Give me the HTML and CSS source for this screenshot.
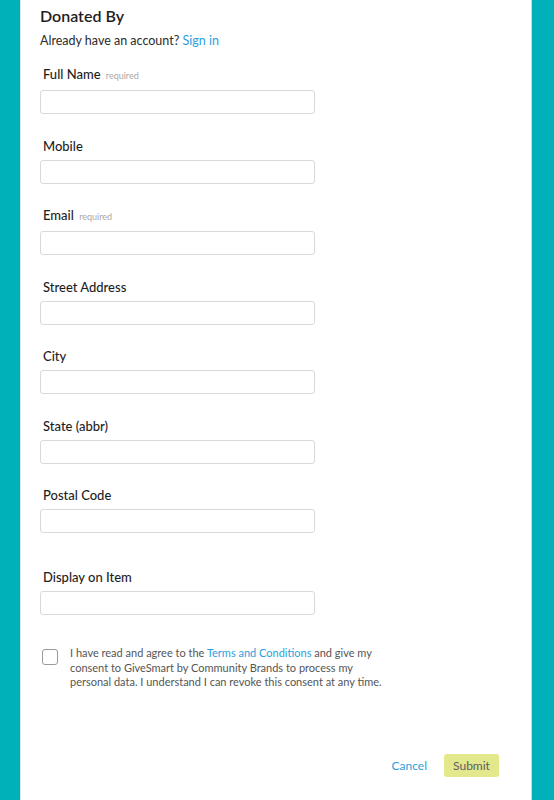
FILE: index.html
```html
<!DOCTYPE html>
<html>
<head>
<meta charset="utf-8">
<link rel="stylesheet" href="styles.css">
</head>
<body>
<div class="page">
  <div class="card">
    <h1 class="title">Donated By</h1>
    <p class="signin">Already have an account? <a class="link" href="#">Sign in</a></p>
    <div class="fields">
      <div class="field">
        <label class="label">Full Name <span class="req">required</span></label>
        <input class="input" type="text">
      </div>
      <div class="field">
        <label class="label">Mobile</label>
        <input class="input" type="text">
      </div>
      <div class="field">
        <label class="label">Email <span class="req">required</span></label>
        <input class="input" type="text">
      </div>
      <div class="field">
        <label class="label">Street Address</label>
        <input class="input" type="text">
      </div>
      <div class="field">
        <label class="label">City</label>
        <input class="input" type="text">
      </div>
      <div class="field">
        <label class="label">State (abbr)</label>
        <input class="input" type="text">
      </div>
      <div class="field">
        <label class="label">Postal Code</label>
        <input class="input" type="text">
      </div>
      <div class="field field-display">
        <label class="label">Display on Item</label>
        <input class="input" type="text">
      </div>
    </div>
    <div class="consent">
      <span class="checkbox"></span>
      <p class="consent-text">I have read and agree to the <a class="link" href="#">Terms and Conditions</a> and give my consent to GiveSmart by Community Brands to process my personal data. I understand I can revoke this consent at any time.</p>
    </div>
    <div class="actions">
      <a class="cancel" href="#">Cancel</a>
      <button class="submit" type="button">Submit</button>
    </div>
  </div>
</div>
</body>
</html>
```

FILE: styles.css
```css
html, body {
  margin: 0;
  padding: 0;
  background: #00b1ba;
  height: 100%;
}
body {
  font-family: "Lato", "Noto Sans", sans-serif;
  color: #222;
}
.page {
  padding: 0 22px 0 20px;
  height: 100%;
}
.card {
  background: #fff;
  border-left: 1px solid #cfe9ec;
  border-right: 1px solid #d6d6d6;
  box-sizing: border-box;
  min-height: 800px;
  padding: 4px 19px 0 19px;
}
.title {
  margin: 0;
  font-size: 16px;
  line-height: 24px;
  font-weight: 600;
  color: #1e1e1e;
}
.signin {
  margin: 5px 0 0 0;
  font-size: 12.5px;
  line-height: 16px;
  color: #2b2b2b;
}
.link {
  color: #2a9fe0;
  text-decoration: none;
}
.fields {
  margin-top: 17px;
  display: flex;
  flex-direction: column;
  gap: 23.5px;
}
.field {
  display: flex;
  flex-direction: column;
  align-items: flex-start;
  gap: 6px;
}
.field-display {
  margin-top: 12.5px;
}
.label {
  display: block;
  padding-left: 3px;
  font-size: 13px;
  line-height: 16px;
  font-weight: 500;
  color: #1e1e1e;
}
.req {
  font-size: 9px;
  font-weight: 400;
  color: #a8a8a8;
  margin-left: 2px;
}
.input {
  box-sizing: border-box;
  width: 275px;
  height: 24px;
  border: 1px solid #d9d9d9;
  border-radius: 3px;
  background: #fff;
  margin: 0;
  padding: 0 6px;
}
.consent {
  margin-top: 33px;
  display: flex;
  align-items: flex-start;
  gap: 12px;
  padding-left: 2px;
}
.checkbox {
  flex: none;
  box-sizing: border-box;
  width: 16px;
  height: 16px;
  border: 1px solid #9a9a9a;
  border-radius: 3px;
  margin-top: 1px;
  background: #fff;
}
.consent-text {
  margin: -2px 0 0 0;
  width: 320px;
  font-size: 11px;
  line-height: 14.6px;
  color: #555;
}
.actions {
  margin-top: 64px;
  display: flex;
  justify-content: flex-end;
  align-items: center;
  gap: 17px;
  padding-right: 13px;
}
.cancel {
  font-size: 12px;
  color: #2a9fe0;
  text-decoration: none;
}
.submit {
  font-family: inherit;
  font-size: 12px;
  color: #5a5e66;
  background: #e2e88b;
  border: none;
  border-radius: 3px;
  width: 55px;
  height: 23px;
  padding: 0;
}
```
